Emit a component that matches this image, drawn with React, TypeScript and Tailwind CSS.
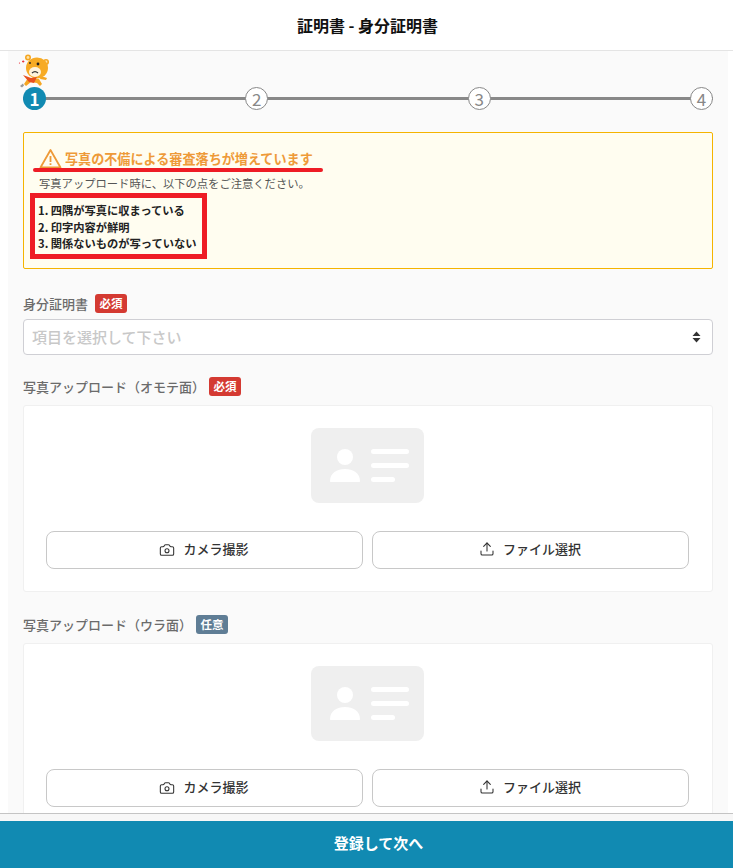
import { Camera, Upload } from "lucide-react";

const STEPS = [1, 2, 3, 4];

const Bear = () => (
  <svg width="36" height="36" viewBox="0 0 36 36" className="absolute left-[17px] top-[53px]">
    <path d="M11 25l-4 6 2 2 5-4 6 1 3 3 2-2-3-5z" fill="#f5a623" />
    <path d="M24 23l6 2-1 2-6-1z" fill="#f5a623" />
    <circle cx="11" cy="4.5" r="3" fill="#f5a623" />
    <circle cx="29" cy="9" r="3" fill="#f5a623" />
    <circle cx="11" cy="4.5" r="1.4" fill="#fde3a7" />
    <circle cx="29" cy="9" r="1.4" fill="#fde3a7" />
    <ellipse cx="20" cy="15" rx="11" ry="10.5" fill="#f7ab25" />
    <ellipse cx="18" cy="19" rx="6" ry="5" fill="#fff3dc" />
    <circle cx="21" cy="11" r="1.4" fill="#222" />
    <circle cx="13" cy="10" r="0.9" fill="#222" />
    <path d="M15 20q3-3 6 0" stroke="#333" strokeWidth="1.2" fill="none" />
    <path d="M6 22l8 3 6-1-3 6-5-1z" fill="#e8501f" />
    <path d="M5 8.5h2.4M6.2 7.3v2.4" stroke="#e8202a" strokeWidth="0.8" />
    <circle cx="2.5" cy="10" r="0.6" fill="#e8202a" />
    <path d="M3 33l3-2.5 1 2-2 2z" fill="#999" />
  </svg>
);

const Step = ({ n }: { n: number }) =>
  n === 1 ? (
    <div className="relative z-10 flex h-[23px] w-[23px] shrink-0 items-center justify-center rounded-full bg-[#118ab2] text-[17px] font-bold leading-none text-white">
      {n}
    </div>
  ) : (
    <div className="relative z-10 flex h-[23px] w-[23px] shrink-0 items-center justify-center rounded-full border border-[#888888] bg-white text-[17px] leading-none text-[#888888]">
      {n}
    </div>
  );

const Badge = ({ children, optional }: { children: string; optional?: boolean }) => (
  <span
    className={
      "flex h-[19px] w-[32px] items-center justify-center rounded-[3px] text-[11.5px] font-bold leading-none text-white " +
      (optional ? "bg-[#5f7d95]" : "bg-[#d43a32]")
    }
  >
    {children}
  </span>
);

const IdCard = () => (
  <svg width="113" height="75" viewBox="0 0 113 75">
    <rect width="113" height="75" rx="8" fill="#efefef" />
    <circle cx="34" cy="29" r="8" fill="#fff" />
    <path d="M19 53c0-8 7-12 15-12s15 4 15 12c0 .6-.4 1-1 1H20c-.6 0-1-.4-1-1z" fill="#fff" />
    <rect x="60" y="21" width="38" height="5" rx="2.5" fill="#fff" />
    <rect x="60" y="35" width="38" height="5" rx="2.5" fill="#fff" />
    <rect x="60" y="49" width="24" height="5" rx="2.5" fill="#fff" />
  </svg>
);

const UploadCard = () => (
  <div className="flex h-[187px] flex-col items-center rounded-[3px] border border-[#f0f0f0] bg-white pl-[22px] pr-[23px] pt-[22px]">
    <IdCard />
    <div className="mt-[28px] grid w-full grid-cols-2 gap-[9px]">
      <button className="flex h-[38px] items-center justify-center gap-2 rounded-[8px] border border-[#c8c8c8] bg-white pb-[2px] pr-[1px] text-[13px] font-medium text-[#333333]">
        <Camera size={16} strokeWidth={1.6} className="mt-[2px]" />
        カメラ撮影
      </button>
      <button className="flex h-[38px] items-center justify-center gap-2 rounded-[8px] border border-[#c8c8c8] bg-white pb-[2px] pr-[1px] text-[13px] font-medium text-[#333333]">
        <Upload size={16} strokeWidth={1.6} />
        ファイル選択
      </button>
    </div>
  </div>
);

const Label = ({ text, badge, optional }: { text: string; badge: string; optional?: boolean }) => (
  <div className="flex h-[19px] items-center gap-[4px] text-[13px] font-medium text-[#6b6b6b]">
    {text}
    <Badge optional={optional}>{badge}</Badge>
  </div>
);

export default function App() {
  return (
    <div className="relative flex h-[868px] w-[733px] flex-col overflow-hidden bg-white font-['Noto_Sans_CJK_JP','Noto_Sans',sans-serif]">
      <header className="flex h-[51px] shrink-0 items-center justify-center border-b border-[#e4e4e4] pl-[2px] text-[16px] font-bold text-[#111111]">
        証明書 - 身分証明書
      </header>

      <main className="ml-[8px] mr-[5px] min-h-0 flex-1 overflow-hidden bg-[#fafafa] px-[15px]">
        <Bear />
        <div className="relative mt-[36px] flex items-center justify-between">
          <div className="absolute left-0 right-0 top-[10px] h-[3px] bg-[#888888]" />
          {STEPS.map((n) => (
            <Step key={n} n={n} />
          ))}
        </div>

        <section className="relative mt-[22px] h-[137px] rounded-[2px] border border-[#f5b400] bg-[#fffdf0] pl-[15px] pt-[15px]">
          <div className="flex items-center gap-[3px] text-[13.1px] font-bold leading-[22px] text-[#ee9a38]">
            <svg width="23" height="22" viewBox="0 0 23 22" fill="none" stroke="#ee9a38" strokeWidth="1.8" strokeLinejoin="round">
              <path d="M11.5 2L21.5 19.5H1.5z" />
              <path d="M11.5 8v6M11.5 15.3v1.8" />
            </svg>
            写真の不備による審査落ちが増えています
          </div>
          <p className="mt-[5px] text-[11.3px] leading-[16px] text-[#555555]">
            写真アップロード時に、以下の点をご注意ください。
          </p>
          <ol className="ml-[-1px] mt-[11px] text-[11.25px] font-bold leading-[16.5px] text-[#222222]">
            <li>1. 四隅が写真に収まっている</li>
            <li>2. 印字内容が鮮明</li>
            <li>3. 関係ないものが写っていない</li>
          </ol>
          {/* red markup drawn over the notice */}
          <div className="absolute left-[9px] top-[35px] h-[4px] w-[290px] rounded-full bg-[#ee1c25]" />
          <div className="absolute left-[6px] top-[60px] h-[66px] w-[177px] border-[5px] border-[#ee1c25]" />
        </section>

        <div className="mt-[25px]">
          <div className="flex h-[19px] items-center gap-[7px] text-[13px] font-medium text-[#6b6b6b]">
            身分証明書
            <Badge>必須</Badge>
          </div>
          <div className="relative mt-[6px] flex h-[36px] items-center rounded-[4px] border border-[#cfcfd4] bg-white pl-[8px] text-[15px] font-medium text-[#c8c8c8]">
            項目を選択して下さい
            <svg width="9" height="12" viewBox="0 0 9 12" className="absolute right-[11px] top-[11px]" fill="#333333">
              <path d="M4.5 0.5L8.5 5H0.5zM4.5 11.5L0.5 7H8.5z" />
            </svg>
          </div>
        </div>

        <div className="mt-[22px]">
          <Label text="写真アップロード（オモテ面）" badge="必須" />
          <div className="mt-[9px]">
            <UploadCard />
          </div>
        </div>

        <div className="mt-[23px]">
          <Label text="写真アップロード（ウラ面）" badge="任意" optional />
          <div className="mt-[9px]">
            <UploadCard />
          </div>
        </div>
      </main>

      <footer className="absolute bottom-0 left-0 right-0 border-t border-[#c4c4c4] bg-[#f7f7f7] pt-[7px]">
        <button className="flex h-[47px] w-full items-center justify-center bg-[#118ab2] pb-[2px] pl-[24px] text-[15px] font-bold text-white">
          登録して次へ
        </button>
      </footer>
    </div>
  );
}
